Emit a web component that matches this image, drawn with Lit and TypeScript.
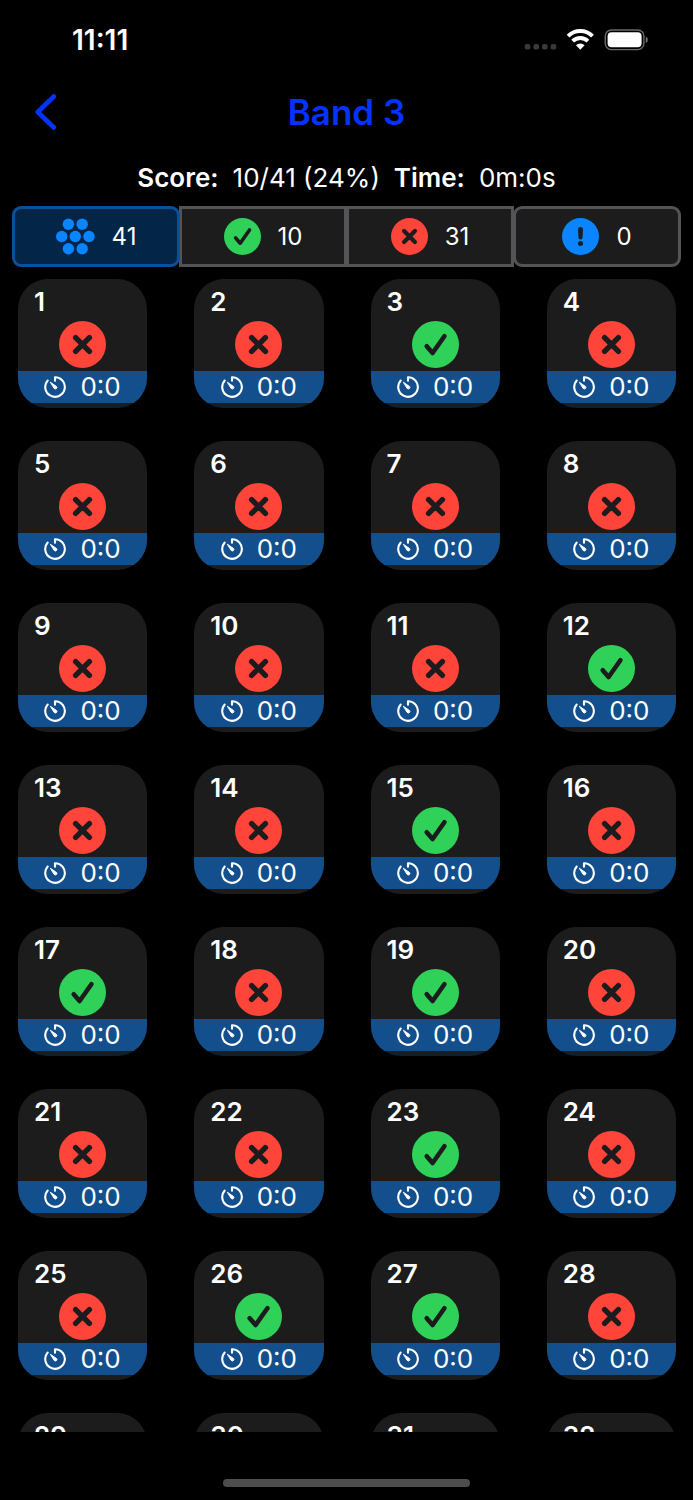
import { LitElement, html, css, svg } from "lit";
import { customElement, property, state } from "lit/decorators.js";

type Mark = "all" | "right" | "wrong" | "skipped";

const MARKS = {
  all: svg`<g fill="#0a84ff">
    <circle cx="12.4" cy="6.2" r="5.7"/><circle cx="26.2" cy="6.2" r="5.7"/>
    <circle cx="5.7" cy="18.5" r="5.7"/><circle cx="19.3" cy="18.5" r="5.7"/><circle cx="33" cy="18.5" r="5.7"/>
    <circle cx="12.4" cy="30.8" r="5.7"/><circle cx="26.2" cy="30.8" r="5.7"/></g>`,
  right: svg`<circle cx="23.5" cy="23.5" r="23.5" fill="#30d158"/>
    <path d="M14.7 25.2 20.6 32 32.4 15.2" fill="none" stroke="#1c1c1e" stroke-width="4.6" stroke-linecap="round" stroke-linejoin="round"/>`,
  wrong: svg`<circle cx="23.5" cy="23.5" r="23.5" fill="#ff453a"/>
    <path d="M16.6 16.6 30.4 30.4M30.4 16.6 16.6 30.4" stroke="#1c1c1e" stroke-width="5.4" stroke-linecap="round"/>`,
  skipped: svg`<circle cx="23.5" cy="23.5" r="23.5" fill="#0a84ff"/>
    <path d="M20.4 14.6a3.1 3.1 0 0 1 6.2 0l-.5 10.2a2.6 2.6 0 0 1-5.2 0z" fill="#1c1c1e"/>
    <circle cx="23.5" cy="32.3" r="3.2" fill="#1c1c1e"/>`,
};

@customElement("mark-icon")
class MarkIcon extends LitElement {
  static styles = css`
    :host { display: block; }
    svg { display: block; width: 100%; height: 100%; }
  `;
  @property() kind: Mark = "right";
  render() {
    return html`<svg viewBox=${this.kind === "all" ? "0 0 39 37" : "0 0 47 47"} aria-hidden="true">${MARKS[this.kind]}</svg>`;
  }
}

@customElement("question-tile")
class QuestionTile extends LitElement {
  static styles = css`
    :host { display: block; }
    .tile {
      display: flex; flex-direction: column; width: 100%; height: 129px;
      margin: 0; padding: 0 0 5px; border: 0; border-radius: 30px; overflow: hidden;
      background: #1c1c1c; color: #fff; font: inherit; text-align: left;
    }
    .number { padding: 7px 16px 0; font-size: 26px; line-height: 32px; font-weight: 600; }
    .mark { align-self: center; width: 47px; height: 47px; margin-top: 3px; }
    .time {
      display: flex; align-items: center; justify-content: center; gap: 14px;
      width: 100%; height: 32px; margin-top: auto; background: #134f8c;
      font-size: 26px; line-height: 32px; font-weight: 400;
    }
    .timer { width: 22px; height: 22px; }
  `;
  @property({ type: Number }) number = 0;
  @property() mark: Mark = "right";
  render() {
    return html`<button class="tile" type="button">
      <span class="number">${this.number}</span>
      <mark-icon class="mark" kind=${this.mark}></mark-icon>
      <span class="time">
        <svg class="timer" viewBox="0 0 22 22" fill="none" stroke="#fff" stroke-width="2.1" stroke-linecap="round" stroke-linejoin="round" aria-hidden="true">
          <path d="M11 4.8V1.2A9.8 9.8 0 1 1 3.7 4.5"/>
          <path d="M6.6 6.4 12.6 10.6a1.5 1.5 0 0 1-2.1 2.1z" fill="#fff" stroke-width="1"/>
        </svg>
        <span>0:0</span>
      </span>
    </button>`;
  }
}

@customElement("app-root")
class AppRoot extends LitElement {
  static styles = css`
    :host {
      display: flex; flex-direction: column; height: 100vh; overflow: hidden;
      background: #000; color: #fff; font-family: Inter, "Liberation Sans", sans-serif;
    }
    .status { display: flex; align-items: center; justify-content: space-between; height: 80px; padding: 0 44px 0 72px; }
    .clock { font-size: 28px; font-weight: 600; }
    .indicators { display: block; width: 125px; height: 22px; }
    .nav { display: grid; grid-template-columns: 48px 1fr 48px; align-items: center; height: 64px; padding: 0 22px; }
    .back { display: flex; justify-content: center; margin: 0; padding: 0; border: 0; background: none; }
    .chevron { width: 22px; height: 36px; }
    .title { margin: 0; text-align: center; color: #0433ff; font-size: 35px; line-height: 44px; font-weight: 600; }
    .summary {
      display: flex; justify-content: center; gap: 14px; margin: 0; padding: 17px 0 11px;
      font-size: 26px; line-height: 34px;
    }
    .label { font-weight: 600; }
    .filters { display: grid; grid-template-columns: repeat(4, 1fr); padding: 0 13px 0 12px; }
    .filter {
      display: flex; align-items: center; justify-content: center; gap: 17px;
      height: 61px; margin: 0 -1px 0 0; padding: 0; border: 3px solid #545457;
      background: #1c1c1c; color: #fff; font: inherit; font-size: 24px;
    }
    .filter:last-child, .filter.on { border-radius: 9px; }
    .filter.on { position: relative; border-color: #08519d; background: #032548; }
    .icon { width: 37px; height: 37px; }
    .icon.wide { width: 39px; }
    .list { flex: 1; min-height: 0; overflow-y: auto; scrollbar-width: none; margin-top: 12px; }
    .grid { display: grid; grid-template-columns: repeat(4, 1fr); gap: 33px 47px; padding: 0 17px 0 18px; }
    .home { display: flex; justify-content: center; height: 21px; padding-top: 47px; }
    .bar { width: 247px; height: 8px; border-radius: 4px; background: #4d4d4d; }
  `;

  @state() filter: Mark = "all";

  private filters: { kind: Mark; count: number; name: string }[] = [
    { kind: "all", count: 41, name: "All" },
    { kind: "right", count: 10, name: "Correct" },
    { kind: "wrong", count: 31, name: "Incorrect" },
    { kind: "skipped", count: 0, name: "Unanswered" },
  ];
  private correct = new Set([3, 12, 15, 17, 19, 23, 26, 27]);
  private questions = Array.from({ length: 32 }, (_, i) => i + 1);

  render() {
    return html`
      <div class="status">
        <span class="clock">11:11</span>
        <svg class="indicators" viewBox="0 0 125 22" aria-hidden="true">
          <g fill="#3a3a3a">
            <rect x=".7" y="15" width="5.6" height="5.6" rx="2"/><rect x="9.4" y="15" width="5.6" height="5.6" rx="2"/>
            <rect x="18" y="15" width="5.6" height="5.6" rx="2"/><rect x="26.7" y="15" width="5.6" height="5.6" rx="2"/>
          </g>
          <g fill="none" stroke="#fff" stroke-width="4">
            <path d="M44.1 7.1a17.3 17.3 0 0 1 24.4 0"/><path d="M48.7 12.2a10.8 10.8 0 0 1 15.2 0"/>
          </g>
          <path d="M56.3 20.7 52 16.2a6 6 0 0 1 8.6 0z" fill="#fff"/>
          <rect x="81.3" y="1" width="38.6" height="19.6" rx="6" fill="none" stroke="#6b686b" stroke-width="1.4"/>
          <rect x="83.6" y="3.2" width="34" height="15" rx="4" fill="#fff"/>
          <path d="M121.8 7.5c2.6 1 2.6 5.6 0 6.6z" fill="#777"/>
        </svg>
      </div>
      <header class="nav">
        <button class="back" type="button" aria-label="Back">
          <svg class="chevron" viewBox="0 0 22 36" fill="none" stroke="#0433ff" stroke-width="4.6" stroke-linecap="round" stroke-linejoin="round">
            <path d="M18.8 2.5 2.8 18 18.8 33.5"/>
          </svg>
        </button>
        <h1 class="title">Band 3</h1>
      </header>
      <p class="summary">
        <span class="label">Score:</span><span>10/41 (24%)</span>
        <span class="label">Time:</span><span>0m:0s</span>
      </p>
      <div class="filters">
        ${this.filters.map((f) => html`
          <button type="button" class="filter ${f.kind === this.filter ? "on" : ""}" aria-label="${f.name} ${f.count}"
            aria-pressed=${f.kind === this.filter} @click=${() => (this.filter = f.kind)}>
            <mark-icon class="icon ${f.kind === "all" ? "wide" : ""}" kind=${f.kind}></mark-icon>
            <span>${f.count}</span>
          </button>`)}
      </div>
      <main class="list">
        <div class="grid">
          ${this.questions.map((n) => html`<question-tile .number=${n} .mark=${this.correct.has(n) ? "right" : "wrong"}></question-tile>`)}
        </div>
      </main>
      <footer class="home"><div class="bar"></div></footer>
    `;
  }
}
